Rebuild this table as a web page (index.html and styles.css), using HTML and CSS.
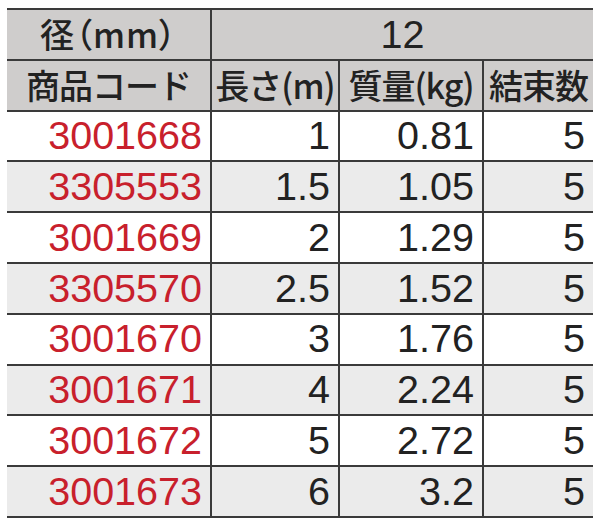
FILE: index.html
```html
<!DOCTYPE html>
<html lang="ja">
<head>
<meta charset="utf-8">
<link rel="stylesheet" href="styles.css">
</head>
<body>
<table class="spec">
  <colgroup>
    <col class="c1"><col class="c2"><col class="c3"><col class="c4">
  </colgroup>
  <thead>
    <tr class="head">
      <th class="jp palt">径（mm）</th>
      <th class="num-head" colspan="3">12</th>
    </tr>
    <tr class="head">
      <th class="jp">商品コード</th>
      <th class="jp">長さ(m)</th>
      <th class="jp">質量(kg)</th>
      <th class="jp">結束数</th>
    </tr>
  </thead>
  <tbody>
    <tr><td class="code">3001668</td><td>1</td><td>0.81</td><td>5</td></tr>
    <tr class="alt"><td class="code">3305553</td><td>1.5</td><td>1.05</td><td>5</td></tr>
    <tr><td class="code">3001669</td><td>2</td><td>1.29</td><td>5</td></tr>
    <tr class="alt"><td class="code">3305570</td><td>2.5</td><td>1.52</td><td>5</td></tr>
    <tr><td class="code">3001670</td><td>3</td><td>1.76</td><td>5</td></tr>
    <tr class="alt"><td class="code">3001671</td><td>4</td><td>2.24</td><td>5</td></tr>
    <tr><td class="code">3001672</td><td>5</td><td>2.72</td><td>5</td></tr>
    <tr class="alt"><td class="code">3001673</td><td>6</td><td>3.2</td><td>5</td></tr>
  </tbody>
</table>
</body>
</html>
```
FILE: styles.css
```css
html, body {
  margin: 0;
  padding: 0;
  background: #ffffff;
}
body {
  padding: 8px 7px 0 7px;
}
.spec {
  width: 586px;
  border-collapse: collapse;
  table-layout: fixed;
  font-family: "Liberation Sans", Arial, "Noto Sans CJK JP", sans-serif;
  color: #222222;
}
.c1 { width: 204px; }
.c2 { width: 128px; }
.c3 { width: 144px; }
.c4 { width: 110px; }
.spec th, .spec td {
  height: 48.8px;
  padding: 0 8px 0 0;
  border-top: 2px solid #3a3a3a;
  border-bottom: 2px solid #3a3a3a;
  border-left: 2px solid #3a3a3a;
  text-align: right;
  font-size: 39.5px;
  font-weight: normal;
  line-height: 1;
  vertical-align: middle;
  white-space: nowrap;
}
.spec th:first-child, .spec td:first-child {
  border-left: none;
}
.head th {
  background: #cfcdcc;
  text-align: center;
  padding: 0;
}
.head th.jp {
  font-family: "Noto Sans CJK JP", sans-serif;
  font-size: 34px;
  font-weight: 500;
  letter-spacing: -1px;
}
.head th.palt {
  font-feature-settings: "palt";
  letter-spacing: 1px;
}
.head th.num-head {
  font-size: 39.5px;
}
.alt td {
  background: #ebebeb;
}
.code {
  color: #c8202c;
}
```
